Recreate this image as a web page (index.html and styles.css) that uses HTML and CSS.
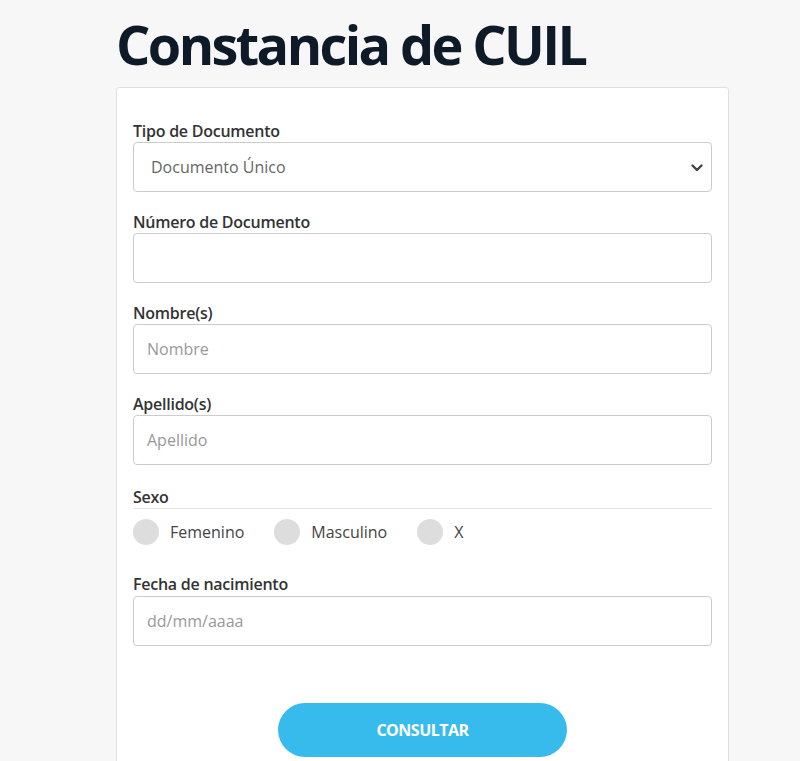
FILE: index.html
```html
<!DOCTYPE html>
<html lang="es">

<head>
    <meta charset="UTF-8">
    <meta name="viewport" content="width=device-width, initial-scale=1.0">
    <title>Constancia de CUIL</title>
    <link rel="stylesheet" href="styles.css">
</head>

<body>
    <main class="page">
        <h1 class="title">Constancia de CUIL</h1>

        <form class="card">
            <div class="field">
                <label for="tipo">Tipo de Documento</label>
                <div class="select-wrap">
                    <select id="tipo" class="control">
                        <option>Documento Único</option>
                        <option>Libreta Cívica</option>
                        <option>Libreta de Enrolamiento</option>
                    </select>
                    <!-- chevron -->
                    <svg class="chevron" width="12" height="8" viewBox="0 0 12 8">
                        <path d="M1.5 1.5 L6 6 L10.5 1.5" fill="none" stroke="#444" stroke-width="2.4" stroke-linecap="round" stroke-linejoin="round"/>
                    </svg>
                </div>
            </div>

            <div class="field">
                <label for="numero">Número de Documento</label>
                <input id="numero" class="control" type="text">
            </div>

            <div class="field">
                <label for="nombre">Nombre(s)</label>
                <input id="nombre" class="control" type="text" placeholder="Nombre">
            </div>

            <div class="field">
                <label for="apellido">Apellido(s)</label>
                <input id="apellido" class="control" type="text" placeholder="Apellido">
            </div>

            <fieldset class="sexo">
                <legend>Sexo</legend>
                <div class="radios">
                    <label class="radio"><input type="radio" name="sexo" value="F"> Femenino</label>
                    <label class="radio"><input type="radio" name="sexo" value="M"> Masculino</label>
                    <label class="radio"><input type="radio" name="sexo" value="X"> X</label>
                </div>
            </fieldset>

            <div class="field field-fecha">
                <label for="fecha">Fecha de nacimiento</label>
                <input id="fecha" class="control" type="text" placeholder="dd/mm/aaaa">
            </div>

            <div class="actions">
                <button type="submit" class="btn">CONSULTAR</button>
            </div>
        </form>
    </main>
</body>

</html>
```

FILE: styles.css
```css
body {
    margin: 0;
    background-color: #f7f7f7;
    font-family: "Open Sans", "Noto Sans", Arial, sans-serif;
    color: #333;
}

.page {
    width: 613px;
    margin-left: 116px;
}

.title {
    margin: 0;
    padding-top: 14px;
    height: 87px;
    box-sizing: border-box;
    font-size: 54px;
    line-height: 60px;
    font-weight: 700;
    letter-spacing: -2.6px;
    color: #0e1a28;
}

.card {
    background-color: #fff;
    border: 1px solid #e0e0e0;
    border-radius: 3px;
    padding: 32px 16px 40px;
    height: 700px;
}

.field {
    margin-bottom: 19px;
}

.field label,
.sexo legend {
    display: block;
    font-size: 16px;
    line-height: 22px;
    font-weight: 600;
    color: #333;
    letter-spacing: -0.25px;
}

.control {
    display: block;
    width: 100%;
    height: 50px;
    box-sizing: border-box;
    border: 1px solid #ccc;
    border-radius: 4px;
    padding: 0 13px;
    font-family: inherit;
    font-size: 16px;
    color: #666;
    background-color: #fff;
}

.control::placeholder {
    color: #999;
}

.select-wrap {
    position: relative;
}

.select-wrap select {
    appearance: none;
    -webkit-appearance: none;
    padding-left: 17px;
}

.chevron {
    position: absolute;
    right: 9px;
    top: 22px;
    pointer-events: none;
}

.sexo {
    border: 0;
    padding: 0;
    margin: 0 0 28px;
    padding-top: 2px;
}

.sexo legend {
    width: 100%;
    padding: 0;
    border-bottom: 1px solid #e3e3e3;
    float: left;
}

.radios {
    clear: both;
    display: flex;
    gap: 30px;
    padding-top: 10px;
}

.radio {
    display: flex;
    align-items: center;
    gap: 11px;
    font-size: 16px;
    color: #444;
}

.radio input {
    appearance: none;
    -webkit-appearance: none;
    margin: 0;
    width: 26px;
    height: 26px;
    border-radius: 50%;
    background-color: #ddd;
}

.radio input:checked {
    background-color: #37bbed;
}

.field-fecha label {
    margin-bottom: 1px;
}

.actions {
    display: flex;
    justify-content: center;
    padding-top: 38px;
}

.btn {
    width: 289px;
    height: 54px;
    border: 0;
    border-radius: 27px;
    background-color: #37bbed;
    color: #fff;
    font-family: inherit;
    font-size: 16px;
    font-weight: 700;
    letter-spacing: -0.5px;
}
```
